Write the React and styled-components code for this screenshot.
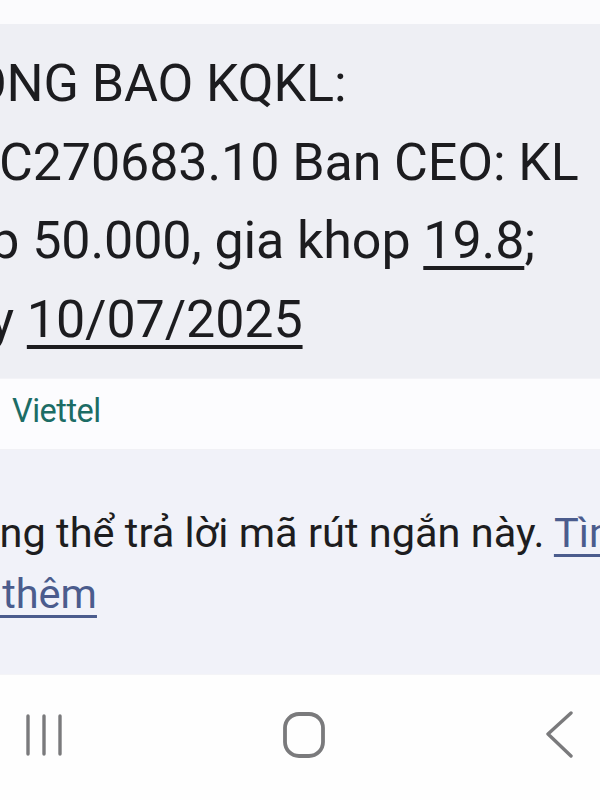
import React from "react";
import styled, { createGlobalStyle } from "styled-components";

const GlobalStyle = createGlobalStyle`
  html, body {
    margin: 0;
    padding: 0;
    background: #fefefe;
  }
  body {
    font-family: Roboto, "Noto Sans", "Liberation Sans", sans-serif;
  }
`;

const Screen = styled.div`
  width: 600px;
  height: 800px;
  display: flex;
  flex-direction: column;
  overflow: hidden;
  background: #fefefe;
`;

const TopStrip = styled.div`
  height: 24px;
  flex: none;
  background: #fbfbfd;
`;

const Bubble = styled.div`
  flex: none;
  height: 354px;
  box-sizing: border-box;
  padding-top: 21px;
  background: #eeeff4;
  overflow: hidden;
`;

const MessageLine = styled.div`
  font-size: 52px;
  line-height: 78.5px;
  color: #1c1c1f;
  white-space: nowrap;
  margin-left: ${(p) => p.$offset}px;
  letter-spacing: -0.1px;
`;

const Linked = styled.span`
  text-decoration: underline;
  text-decoration-thickness: 3.5px;
  text-underline-offset: 8px;
`;

const SenderStrip = styled.div`
  flex: none;
  height: 72px;
  box-sizing: border-box;
  padding: 16px 0 0 12px;
  background: #fcfcfe;
  border-top: 1px solid #f3f3f7;
  border-bottom: 1px solid #f1f1f5;
`;

const SenderName = styled.span`
  font-size: 32.5px;
  line-height: 32px;
  color: #1c6c65;
  letter-spacing: -0.5px;
`;

const InfoArea = styled.div`
  flex: none;
  height: 224px;
  box-sizing: border-box;
  padding-top: 52px;
  background: #f1f2f9;
  overflow: hidden;
`;

const InfoLine = styled.div`
  font-size: 41.5px;
  line-height: 61px;
  color: #1d1d20;
  white-space: nowrap;
  margin-left: ${(p) => p.$offset}px;
`;

const LearnMore = styled.span`
  color: #4b5c8d;
  text-decoration: underline;
  text-decoration-thickness: 3px;
  text-underline-offset: 7px;
`;

const NavBar = styled.nav`
  flex: 1;
  display: flex;
  align-items: center;
  justify-content: space-between;
  padding: 0 26px 6px 26px;
  background: #fefefe;
  border-top: 1px solid #f4f4f7;
`;

const NavIcon = styled.svg`
  display: block;
  color: #7a7a7c;
`;

function RecentsIcon() {
  return (
    <NavIcon width="36" height="42" viewBox="0 0 36 42" fill="none">
      <g stroke="currentColor" strokeWidth="3.4" strokeLinecap="round">
        <line x1="2" y1="2" x2="2" y2="40" />
        <line x1="18" y1="2" x2="18" y2="40" />
        <line x1="34" y1="2" x2="34" y2="40" />
      </g>
    </NavIcon>
  );
}

function HomeIcon() {
  return (
    <NavIcon width="42" height="46" viewBox="0 0 42 46" fill="none">
      <rect
        x="2"
        y="2"
        width="38"
        height="42"
        rx="14"
        stroke="currentColor"
        strokeWidth="3.8"
      />
    </NavIcon>
  );
}

function BackIcon() {
  return (
    <NavIcon width="28" height="48" viewBox="0 0 28 48" fill="none">
      <polyline
        points="25,2 2,23 25,45"
        stroke="currentColor"
        strokeWidth="3.4"
        strokeLinecap="round"
        strokeLinejoin="round"
      />
    </NavIcon>
  );
}

export default function App() {
  return (
    <>
      <GlobalStyle />
      <Screen>
        <TopStrip />
        <Bubble>
          <MessageLine $offset={-97}>THONG BAO KQKL:</MessageLine>
          <MessageLine $offset={-1}>C270683.10 Ban CEO: KL</MessageLine>
          <MessageLine $offset={-94}>
            khop 50.000, gia khop <Linked>19.8</Linked>;
          </MessageLine>
          <MessageLine $offset={-96}>
            ngay <Linked>10/07/2025</Linked>
          </MessageLine>
        </Bubble>
        <SenderStrip>
          <SenderName>Viettel</SenderName>
        </SenderStrip>
        <InfoArea>
          <InfoLine $offset={-73}>
            Không thể trả lời mã rút ngắn này. <LearnMore>Tìm</LearnMore>
          </InfoLine>
          <InfoLine $offset={-86}>
            <LearnMore>hiểu thêm</LearnMore>
          </InfoLine>
        </InfoArea>
        <NavBar>
          <RecentsIcon />
          <HomeIcon />
          <BackIcon />
        </NavBar>
      </Screen>
    </>
  );
}
